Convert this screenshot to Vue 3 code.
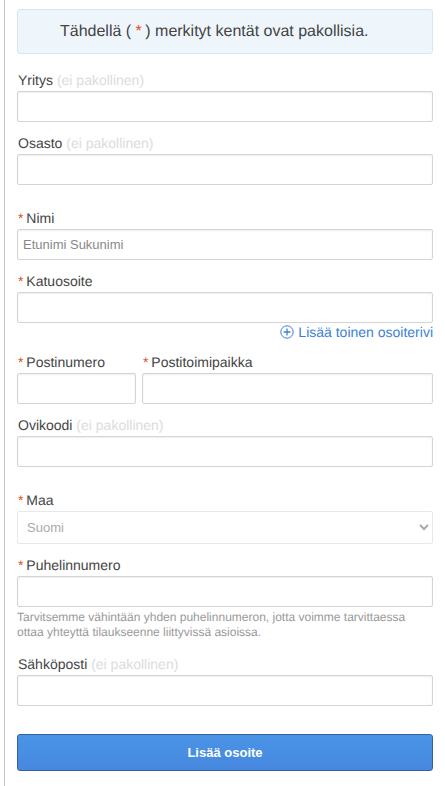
<template>
  <div class="page">
    <form class="address-form" @submit.prevent>
      <p class="notice">Tähdellä ( <span class="star">*</span> ) merkityt kentät ovat pakollisia.</p>

      <div class="field first">
        <label>Yritys <span class="optional">(ei pakollinen)</span></label>
        <input type="text">
      </div>
      <div class="field">
        <label>Osasto <span class="optional">(ei pakollinen)</span></label>
        <input type="text">
      </div>

      <div class="field spaced">
        <label><span class="star">*</span> Nimi</label>
        <input type="text" placeholder="Etunimi Sukunimi">
      </div>
      <div class="field">
        <label><span class="star">*</span> Katuosoite</label>
        <input type="text">
        <a class="add-line" href="#" @click.prevent>
          <svg width="14" height="14" viewBox="0 0 14 14" fill="none" stroke="currentColor">
            <circle cx="7" cy="7" r="6.2" />
            <path d="M7 3.6v6.8M3.6 7h6.8" stroke-width="1.3" />
          </svg>
          Lisää toinen osoiterivi
        </a>
      </div>

      <div class="postal-row">
        <div class="field zip">
          <label><span class="star">*</span> Postinumero</label>
          <input type="text">
        </div>
        <div class="field city">
          <label><span class="star">*</span> Postitoimipaikka</label>
          <input type="text">
        </div>
      </div>

      <div class="field">
        <label>Ovikoodi <span class="optional">(ei pakollinen)</span></label>
        <input type="text">
      </div>

      <div class="field spaced">
        <label><span class="star">*</span> Maa</label>
        <select v-model="country">
          <option>Suomi</option>
        </select>
      </div>
      <div class="field">
        <label><span class="star">*</span> Puhelinnumero</label>
        <input type="tel">
        <p class="help">Tarvitsemme vähintään yhden puhelinnumeron, jotta voimme tarvittaessa ottaa yhteyttä tilaukseenne liittyvissä asioissa.</p>
      </div>
      <div class="field">
        <label>Sähköposti <span class="optional">(ei pakollinen)</span></label>
        <input type="email">
      </div>

      <button type="submit" class="submit-btn">Lisää osoite</button>
    </form>
  </div>
</template>

<script setup>
import { ref } from 'vue'

const country = ref('Suomi')
</script>

<style scoped>
.page {
  margin-left: 4px;
  height: 786px;
  overflow: hidden;
  box-sizing: border-box;
  border-left: 1px solid #c4c4c4;
  padding: 9px 12px 0 12px;
  font-family: "Liberation Sans", Arial, sans-serif;
  color: #444;
  text-rendering: geometricPrecision;
}
.notice {
  margin: 0;
  height: 45px;
  box-sizing: border-box;
  padding-left: 42px;
  line-height: 43px;
  font-size: 16px;
  color: #444;
  background: #eff6fb;
  border: 1px solid #d3e8f5;
  border-radius: 3px;
}
.star { color: #e2491c; margin-right: -1px; }
.field { margin-top: 12px; }
.field.first { margin-top: 17px; }
.field.spaced { margin-top: 24px; }
.field label {
  display: block;
  height: 18px;
  line-height: 18px;
  margin: 0 0 2px 1px;
  font-size: 14px;
  white-space: nowrap;
}
.optional { color: #dcdcdc; }
.field input {
  display: block;
  width: 100%;
  height: 31px;
  box-sizing: border-box;
  padding: 0 5px;
  font: 13px "Liberation Sans", Arial, sans-serif;
  color: #444;
  background: #fff;
  border: 1px solid #d4d4d4;
  border-radius: 2px;
  box-shadow: inset 0 1px 2px rgba(0, 0, 0, 0.07);
  outline: none;
}
.field input::placeholder { color: #888; opacity: 1; }
.field select {
  display: block;
  width: 100%;
  height: 33px;
  box-sizing: border-box;
  padding: 0 5px;
  font: 13px "Liberation Sans", Arial, sans-serif;
  color: #aaa;
  background: #fff;
  border: 1px solid #e8e8e8;
  border-radius: 2px;
  outline: none;
}
.add-line {
  display: flex;
  justify-content: flex-end;
  align-items: center;
  gap: 4px;
  height: 16px;
  margin-top: 1px;
  font-size: 14px;
  color: #3d7fd6;
  text-decoration: none;
}
.postal-row {
  display: flex;
  gap: 6px;
  margin-top: 13px;
}
.postal-row .field { margin-top: 0; }
.zip { width: 119px; flex: none; }
.city { flex: 1; }
.help {
  margin: 3px 0 0;
  padding-bottom: 3px;
  font-size: 12px;
  line-height: 15px;
  color: #999;
}
.submit-btn {
  display: block;
  width: 100%;
  height: 37px;
  margin-top: 28px;
  font: bold 13px "Liberation Sans", Arial, sans-serif;
  color: #fff;
  background: linear-gradient(#4a94e6, #4688de);
  border: 1px solid #36609c;
  border-radius: 3px;
  cursor: pointer;
}
</style>

<style>
html, body { background: #fff; }
</style>
